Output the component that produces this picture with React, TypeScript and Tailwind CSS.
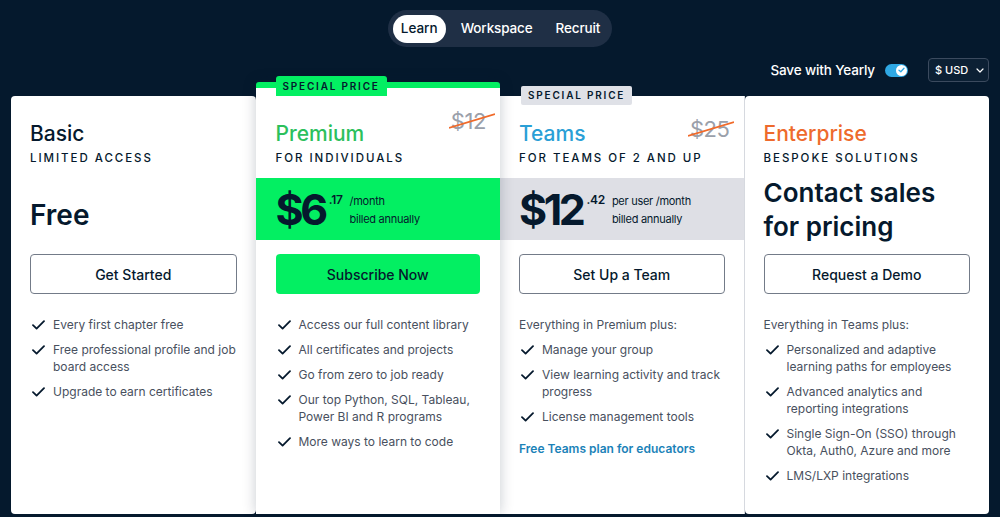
import React from "react";

const Check = () => (
  <svg width="13" height="10" viewBox="0 0 13 10" fill="none" className="shrink-0 mt-[4px]">
    <path d="M1 5.2 L4.6 8.6 L12 1.2" stroke="#05192d" strokeWidth="1.8" strokeLinecap="round" strokeLinejoin="round" />
  </svg>
);

const Item = ({ children }: { children: React.ReactNode }) => (
  <li className="flex gap-[8px] pl-[2px]">
    <Check />
    <span>{children}</span>
  </li>
);

const Strike = ({ text }: { text: string }) => (
  <div className="absolute right-[14px] top-[20px] text-[22px] leading-[26px] text-[#9aa0aa] font-normal tracking-[-0.02em]">
    {text}
    <svg className="absolute -left-[2px] top-0" width="46" height="26" viewBox="0 0 46 26">
      <line x1="0" y1="20" x2="46" y2="6" stroke="#f06a2a" strokeWidth="1.8" />
    </svg>
  </div>
);

export default function App() {
  return (
    <div className="w-[1000px] h-[517px] overflow-hidden bg-[#05192d] font-['Inter',sans-serif] text-[#05192d]">
      {/* Tabs */}
      <div className="flex justify-center pt-[10px]">
        <div className="flex items-center h-[37px] rounded-full bg-[#1f2f45] pl-[5px] pr-[12px]">
          <div className="h-[28px] px-[8px] rounded-full bg-white flex items-center text-[13.5px] font-medium text-[#05192d]">Learn</div>
          <div className="ml-[15px] text-[13.5px] font-medium text-white tracking-[-0.01em]">Workspace</div>
          <div className="ml-[23px] text-[13.5px] font-medium text-white tracking-[-0.01em]">Recruit</div>
        </div>
      </div>

      {/* Yearly row */}
      <div className="flex justify-end items-center pr-[11px] mt-[11px] h-[24px]">
        <span className="text-[13.5px] font-medium text-white tracking-[-0.01em]">Save with Yearly</span>
        <div className="ml-[10px] w-[23px] h-[13px] rounded-full bg-[#2fa8e4] relative">
          <div className="absolute right-[1px] top-[1px] w-[11px] h-[11px] rounded-full bg-white flex items-center justify-center">
            <svg width="7" height="6" viewBox="0 0 7 6" fill="none">
              <path d="M1 3.2 L2.8 4.8 L6 1.2" stroke="#2fa8e4" strokeWidth="1.3" strokeLinecap="round" strokeLinejoin="round" />
            </svg>
          </div>
        </div>
        <div className="ml-[20px] w-[61px] h-[24px] rounded-[4px] border border-[#3b4a5e] bg-[#0c2034] flex items-center pl-[6px] gap-[8px] text-white text-[11px] font-medium">
          <span>$ USD</span>
          <svg width="8" height="5" viewBox="0 0 8 5" fill="none">
            <path d="M1 1 L4 4 L7 1" stroke="white" strokeWidth="1.2" strokeLinecap="round" strokeLinejoin="round" />
          </svg>
        </div>
      </div>

      {/* Cards */}
      <div className="grid grid-cols-4 px-[11px] items-start">
        {/* Basic */}
        <div className="relative mt-[14px] h-[418px] bg-white rounded-[4px] px-[19px] pt-[26px]">
          <div className="text-[21px] leading-[24px] font-medium">Basic</div>
          <div className="mt-[5px] text-[11.5px] leading-[14px] tracking-[0.17em] font-medium">LIMITED ACCESS</div>
          <div className="mt-[13px] h-[62px] flex items-center pt-[12px]">
            <span className="text-[28px] font-semibold">Free</span>
          </div>
          <button className="mt-[14px] w-full h-[40px] rounded-[4px] border border-[#737b88] text-[14px] font-medium">Get Started</button>
          <ul className="mt-[22px] flex flex-col gap-[8px] text-[12px] leading-[17px] text-[#48505e]">
            <Item>Every first chapter free</Item>
            <Item>Free professional profile and job board access</Item>
            <Item>Upgrade to earn certificates</Item>
          </ul>
        </div>

        {/* Premium */}
        <div className="relative z-10 h-[432px] bg-white border-t-[6px] border-[#03ef62] rounded-t-[3px] px-[20px] pt-[34px] shadow-[0_0_14px_rgba(5,25,45,0.22)]">
          <div className="absolute left-[20px] -top-[12px] h-[20px] px-[7px] rounded-t-[3px] bg-[#03ef62] flex items-center text-[10px] tracking-[0.18em] font-semibold">SPECIAL PRICE</div>
          <Strike text="$12" />
          <div className="text-[21px] leading-[24px] font-medium text-[#2cc05c]">Premium</div>
          <div className="mt-[5px] text-[11.5px] leading-[14px] tracking-[0.17em] font-medium">FOR INDIVIDUALS</div>
          <div className="mt-[13px] -mx-[20px] px-[20px] h-[62px] bg-[#03ef62] flex items-start pt-[8px]">
            <span className="text-[43px] leading-[46px] font-bold tracking-[-0.08em]">$6</span>
            <span className="ml-[4px] mt-[5px] text-[12px] font-semibold tracking-tight">.17</span>
            <div className="ml-[7px] mt-[6px] text-[11px] leading-[18px] tracking-tight">
              <div>/month</div>
              <div>billed annually</div>
            </div>
          </div>
          <button className="mt-[14px] w-full h-[40px] rounded-[4px] bg-[#03ef62] text-[14px] font-medium">Subscribe Now</button>
          <ul className="mt-[22px] flex flex-col gap-[8px] text-[12px] leading-[17px] text-[#48505e]">
            <Item>Access our full content library</Item>
            <Item>All certificates and projects</Item>
            <Item>Go from zero to job ready</Item>
            <Item>Our top Python, SQL, Tableau, Power BI and R programs</Item>
            <Item>More ways to learn to code</Item>
          </ul>
        </div>

        {/* Teams */}
        <div className="relative mt-[14px] h-[418px] bg-white border-r border-[#d6d9df] px-[19px] pt-[26px]">
          <div className="absolute left-[21px] -top-[10px] h-[19px] px-[7px] rounded-[2px] bg-[#dfe1e7] flex items-center text-[10px] tracking-[0.18em] font-semibold">SPECIAL PRICE</div>
          <Strike text="$25" />
          <div className="text-[21px] leading-[24px] font-medium text-[#2a9fd6]">Teams</div>
          <div className="mt-[5px] text-[11.5px] leading-[14px] tracking-[0.17em] font-medium">FOR TEAMS OF 2 AND UP</div>
          <div className="mt-[13px] -mx-[19px] px-[19px] h-[62px] bg-[#dedfe5] flex items-start pt-[8px]">
            <span className="text-[43px] leading-[46px] font-bold tracking-[-0.08em]">$12</span>
            <span className="ml-[4px] mt-[5px] text-[12px] font-semibold tracking-tight">.42</span>
            <div className="ml-[7px] mt-[6px] text-[11px] leading-[18px] tracking-tight">
              <div>per user /month</div>
              <div>billed annually</div>
            </div>
          </div>
          <button className="mt-[14px] w-full h-[40px] rounded-[4px] border border-[#737b88] text-[14px] font-medium">Set Up a Team</button>
          <div className="mt-[22px] text-[12px] leading-[17px] text-[#48505e]">Everything in Premium plus:</div>
          <ul className="mt-[8px] flex flex-col gap-[8px] text-[12px] leading-[17px] text-[#48505e]">
            <Item>Manage your group</Item>
            <Item>View learning activity and track progress</Item>
            <Item>License management tools</Item>
          </ul>
          <div className="mt-[15px] text-[12px] leading-[17px] font-semibold text-[#1b82b8]">Free Teams plan for educators</div>
        </div>

        {/* Enterprise */}
        <div className="relative mt-[14px] h-[418px] bg-white rounded-[4px] px-[19px] pt-[26px]">
          <div className="text-[21px] leading-[24px] font-medium text-[#ee6a2c]">Enterprise</div>
          <div className="mt-[5px] text-[11.5px] leading-[14px] tracking-[0.17em] font-medium">BESPOKE SOLUTIONS</div>
          <div className="mt-[11px] h-[64px] text-[26px] leading-[34px] font-semibold">
            Contact sales<br />for pricing
          </div>
          <button className="mt-[14px] w-full h-[40px] rounded-[4px] border border-[#737b88] text-[14px] font-medium">Request a Demo</button>
          <div className="mt-[22px] text-[12px] leading-[17px] text-[#48505e]">Everything in Teams plus:</div>
          <ul className="mt-[8px] flex flex-col gap-[8px] text-[12px] leading-[17px] text-[#48505e]">
            <Item>Personalized and adaptive learning paths for employees</Item>
            <Item>Advanced analytics and reporting integrations</Item>
            <Item>Single Sign-On (SSO) through Okta, Auth0, Azure and more</Item>
            <Item>LMS/LXP integrations</Item>
          </ul>
        </div>
      </div>
    </div>
  );
}
